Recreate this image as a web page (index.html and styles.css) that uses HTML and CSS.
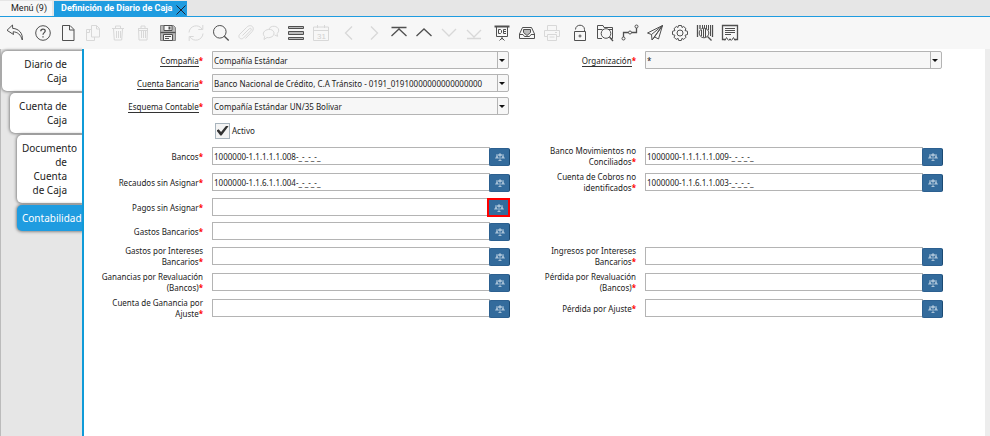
FILE: index.html
```html
<!DOCTYPE html>
<html lang="es">
<head>
<meta charset="utf-8">
<title>Definición de Diario de Caja</title>
<link rel="stylesheet" href="styles.css">
</head>
<body>
<svg class="defs" aria-hidden="true">
  <symbol id="scale" viewBox="0 0 10 8">
    <path d="M5 0v8M1 2h8M3.500 7.500h3" fill="none" stroke="currentColor"/>
    <path d="M2 2L0 5.500h4zM8 2L6 5.500h4zM3.500 1h3v2h-3z" fill="currentColor"/>
  </symbol>
</svg>

<nav class="windows">
  <a class="window-tab" href="#">Menú (9)</a>
  <a class="window-tab active" href="#">Definición de Diario de Caja
    <svg class="close" width="10" height="10" viewBox="0 0 10 10"><path d="M.5.5l9 9M9.500.5l-9 9"/></svg></a>
</nav>

<div class="toolbar">
  <div class="group">
    <button aria-label="Deshacer"><svg viewBox="0 0 18 18"><path d="M6.500 1L1 6.300l6.500 4.200-.4-2.700c4.400.2 7.500 2.600 9.200 8.200.8-6.500-3.300-11.300-9.600-11.600z"/></svg></button>
  </div>
  <div class="group">
    <button aria-label="Ayuda"><svg viewBox="0 0 18 18"><circle cx="9" cy="9" r="7.300"/><path d="M6.800 7.200C6.800 4.400 11.200 4.400 11.200 7c0 1.600-2.200 1.700-2.200 3.800M9 12.200v1.400" class="mid"/></svg></button>
    <button aria-label="Nuevo"><svg viewBox="0 0 18 18"><path d="M3.500 1.500h7.500l4 4v11H3.500zM10.500 1.500v4.500h4.500"/></svg></button>
    <button aria-label="Copiar" disabled><svg viewBox="0 0 18 18"><path d="M7.500 1.500h5l3 3v8.500h-8zM12.500 1.500v3.500h3M7.500 5.500h-5v11h8v-3.500M5.500 5.500v3h-3"/></svg></button>
    <button aria-label="Eliminar" disabled><svg viewBox="0 0 18 18"><path d="M3 4.500h12M6.500 4.500v-2.500h5v2.500M4.500 5l.8 11h7.400l.8-11M7.500 7v7M9.500 7v7M11.500 7v7"/></svg></button>
    <button aria-label="Eliminar selección" disabled><svg viewBox="0 0 18 18"><path d="M4 4.500h10M7 4.500v-2.500h4v2.500M4.500 5l.5 11h8l.5-11M7.500 7v7M9.500 7v7M11.500 7v7M4.500 6.500h9"/></svg></button>
    <button aria-label="Guardar"><svg viewBox="0 0 18 18"><path d="M1.500 1.500h13l2 2v13h-15z" fill="#b8b8b8" class="soft"/><path d="M5 1.500h8v5H5z" fill="#f7f7f7"/><path d="M10.500 2.500v3" class="bold"/><path d="M1.500 8.500h15" class="mid"/><path d="M4.500 10.500h9v6h-9z" fill="#f7f7f7"/><path d="M6 12.500h6M6 14.500h4"/></svg></button>
  </div>
  <div class="group">
    <button aria-label="Refrescar" disabled><svg viewBox="0 0 18 18"><path d="M2 8.500C2.500 1.500 11.500-.5 15 5M15.800 1v4.500h-4.500M16 9.500c-.5 7-9.500 9-13 3.500M2.200 17v-4.500h4.500"/></svg></button>
    <button aria-label="Buscar"><svg viewBox="0 0 18 18"><circle cx="7.800" cy="7.800" r="6.300"/><path d="M12.300 12.300L16.700 16.500" class="mid"/></svg></button>
    <button aria-label="Adjunto" disabled><svg viewBox="0 0 18 18"><path d="M5.500 11.500l6.500-6.500c2-1.500 3 0 1.800 1.500L6.500 14C3.800 16.200.5 13.500 2.500 10.500l7-7c4-4.300 9-.2 5.700 4L8.500 14.500"/></svg></button>
    <button aria-label="Chat" disabled><svg viewBox="0 0 18 18"><path d="M6.500 5.500c6-1 8 6.500 1.500 8-1.200.3-2 .2-3 0L2 15.500l.6-3C-.5 9.500 2.500 5.800 6.500 5.500zM7 5c1.500-4 9.300-3.500 9.700 1 .1 1.600-.6 2.700-1.700 3.600l.6 2.700-3-1.300"/></svg></button>
    <button aria-label="Cuadrícula"><svg viewBox="0 0 18 18"><path d="M1.500 2.500h15v2h-15zM1.500 7.500h15v3h-15zM1.500 13.500h15v2h-15z" fill="#bbb"/></svg></button>
    <button aria-label="Calendario" disabled><svg viewBox="0 0 18 18"><path d="M1.500 3h15v13.500h-15zM1.500 6.500h15M5.500 1v3M12.500 1v3"/><text x="5" y="14.500">31</text></svg></button>
  </div>
  <div class="group">
    <button aria-label="Anterior" disabled><svg viewBox="0 0 18 18"><path d="M12 2.500L5.500 9l6.500 6.500" class="mid"/></svg></button>
    <button aria-label="Siguiente" disabled><svg viewBox="0 0 18 18"><path d="M6 2.500L12.500 9 6 15.500" class="mid"/></svg></button>
    <button aria-label="Primer registro"><svg viewBox="0 0 18 18"><path d="M1.500 3.500h15M1.500 12L9 5l7.500 7" class="mid"/></svg></button>
    <button aria-label="Registro anterior"><svg viewBox="0 0 18 18"><path d="M1.500 12L9 5l7.500 7" class="mid"/></svg></button>
    <button aria-label="Registro siguiente" disabled><svg viewBox="0 0 18 18"><path d="M2 5l7 7 7-7" class="mid"/></svg></button>
    <button aria-label="Último registro" disabled><svg viewBox="0 0 18 18"><path d="M2 6l7 7 7-7M2 14.500h14" class="mid"/></svg></button>
  </div>
  <div class="group">
    <button aria-label="Informe"><svg viewBox="0 0 18 18"><path d="M1.500 2.500h15" class="bold"/><path d="M3.500 3v9.500h11V3M9 12.500v3M6.500 16.500L9 14l2.500 2.500M5.500 5.500h2l1 1v2l-1 1h-2zM13 5.500h-2.500v4H13M10.500 7.500H13"/></svg></button>
    <button aria-label="Archivo"><svg viewBox="0 0 18 18"><path d="M1.500 10L4.500 3.500h9l3 6.500v4.500h-15z"/><path d="M1.500 10.500h3.500l1.500 2h5l1.500-2h3.500"/><path d="M5.500 5.500h7v3L9 11.500 5.500 8.500z" fill="#bbb"/></svg></button>
    <button aria-label="Imprimir" disabled><svg viewBox="0 0 18 18"><path d="M4.500 6.500v-5h9v5M4.500 12.500h-3v-6h15v6h-3M4.500 10.500h9v6h-9zM6.500 13h5M12 8.500h2"/></svg></button>
  </div>
  <div class="group">
    <button aria-label="Bloqueo"><svg viewBox="0 0 18 18"><path d="M3.500 7.500h11v9h-11z"/><path d="M4.500 5.500C4.500-.2 13.500-.2 13.500 5.500v2"/><circle cx="9" cy="12" r="1"/></svg></button>
    <button aria-label="Zoom"><svg viewBox="0 0 18 18"><path d="M15 14.500h1.500v-11H8l-1-2H1.500v13H6M1.500 5.500h5M12.500 5.500h4"/><circle cx="10" cy="9.500" r="4.800"/><path d="M13.500 13l3.500 4" class="mid"/></svg></button>
    <button aria-label="Flujo de trabajo"><svg viewBox="0 0 18 18"><circle cx="2.500" cy="14.500" r="1.500"/><circle cx="9" cy="8.500" r="1.500"/><circle cx="15.500" cy="2.500" r="1.500"/><path d="M2.500 13V8.500h5M10.500 8.500h5V4" class="mid"/></svg></button>
    <button aria-label="Enviar"><svg viewBox="0 0 18 18"><path d="M16.500 1.500L1.500 9l4 1.500L6 16l2.800-3 3.700 2zM16.500 1.500L5.500 10.500M16.500 1.500L8.500 13M16.500 1.500L6 16"/></svg></button>
    <button aria-label="Proceso"><svg viewBox="0 0 18 18"><path d="M7.500 1.500h3l.5 2 1.700-1 2.300 2.200-1 1.800 2.500.8v3.200l-2.500.8 1 1.900-2.200 2.200-1.900-1-.6 2.100H7.700l-.6-2.100-1.900 1L3 13.200l1-1.900-2.500-.8V7.300L4 6.500l-1-1.800 2.300-2.200 1.700 1z"/><circle cx="9" cy="9" r="3"/></svg></button>
    <button aria-label="Información del producto"><svg viewBox="0 0 18 18"><path d="M1.500 1v12M4 1v4M16.500 1v12" class="mid"/><path d="M6.500 1v3M8.500 1v3M10.500 1v4M12.500 1v5M14.500 1v11"/><circle cx="8" cy="9" r="4.800"/><path d="M5.500 6v6M7.500 5v8M9.500 5v8"/><path d="M11.500 12.500l4 4" class="mid"/></svg></button>
    <button aria-label="Personalizar"><svg viewBox="0 0 18 18"><path d="M4 15.500H1.500v-14h15v14H14M8 15.500h2" class="mid"/><path d="M4 4.500h10M4 6.500h10M4 8.500h10M4 10.500h6"/><path d="M4 16.500l1.500-3 2 3M10.500 16.500l2-3 1.500 3"/></svg></button>
  </div>
</div>

<div class="workspace">
  <nav class="levels">
    <a href="#" class="level first"><span>Diario de Caja</span></a>
    <a href="#" class="level second"><span>Cuenta de Caja</span></a>
    <a href="#" class="level third"><span>Documento de Cuenta de Caja</span></a>
    <a href="#" class="level third current"><span>Contabilidad</span></a>
  </nav>

  <form class="panel">
    <div class="row compact">
      <label for="company"><u>Compañía</u><b>*</b></label>
      <span class="combo"><select id="company"><option>Compañía Estándar</option></select></span>
      <label for="org"><u>Organización</u><b>*</b></label>
      <span class="combo"><select id="org"><option>*</option></select></span>
    </div>
    <div class="row compact">
      <label for="account"><u>Cuenta Bancaria</u><b>*</b></label>
      <span class="combo"><select id="account"><option>Banco Nacional de Crédito, C.A Tránsito - 0191_01910000000000000000</option></select></span>
    </div>
    <div class="row compact">
      <label for="schema"><u>Esquema Contable</u><b>*</b></label>
      <span class="combo"><select id="schema"><option>Compañía Estándar UN/35 Bolivar</option></select></span>
    </div>
    <div class="row">
      <div class="check"><input type="checkbox" id="active" checked><label for="active">Activo</label></div>
    </div>
    <div class="row tall">
      <label for="f1"><span>Bancos<b>*</b></span></label>
      <span class="account"><input type="text" id="f1" value="1000000-1.1.1.1.1.008-_-_-_-_"><button type="button" aria-label="Combinación"><svg><use href="#scale"/></svg></button></span>
      <label for="f2"><span>Banco Movimientos no Conciliados<b>*</b></span></label>
      <span class="account"><input type="text" id="f2" value="1000000-1.1.1.1.1.009-_-_-_-_"><button type="button" aria-label="Combinación"><svg><use href="#scale"/></svg></button></span>
    </div>
    <div class="row tall">
      <label for="f3"><span>Recaudos sin Asignar<b>*</b></span></label>
      <span class="account"><input type="text" id="f3" value="1000000-1.1.6.1.1.004-_-_-_-_"><button type="button" aria-label="Combinación"><svg><use href="#scale"/></svg></button></span>
      <label for="f4"><span>Cuenta de Cobros no identificados<b>*</b></span></label>
      <span class="account"><input type="text" id="f4" value="1000000-1.1.6.1.1.003-_-_-_-_"><button type="button" aria-label="Combinación"><svg><use href="#scale"/></svg></button></span>
    </div>
    <div class="row">
      <label for="f5"><span>Pagos sin Asignar<b>*</b></span></label>
      <span class="account marked"><input type="text" id="f5"><button type="button" aria-label="Combinación"><svg><use href="#scale"/></svg></button></span>
    </div>
    <div class="row">
      <label for="f6"><span>Gastos Bancarios<b>*</b></span></label>
      <span class="account"><input type="text" id="f6"><button type="button" aria-label="Combinación"><svg><use href="#scale"/></svg></button></span>
    </div>
    <div class="row tall">
      <label for="f7"><span>Gastos por Intereses Bancarios<b>*</b></span></label>
      <span class="account"><input type="text" id="f7"><button type="button" aria-label="Combinación"><svg><use href="#scale"/></svg></button></span>
      <label for="f8"><span>Ingresos por Intereses Bancarios<b>*</b></span></label>
      <span class="account"><input type="text" id="f8"><button type="button" aria-label="Combinación"><svg><use href="#scale"/></svg></button></span>
    </div>
    <div class="row tall">
      <label for="f9"><span>Ganancias por Revaluación (Bancos)<b>*</b></span></label>
      <span class="account"><input type="text" id="f9"><button type="button" aria-label="Combinación"><svg><use href="#scale"/></svg></button></span>
      <label for="f10"><span>Pérdida por Revaluación (Bancos)<b>*</b></span></label>
      <span class="account"><input type="text" id="f10"><button type="button" aria-label="Combinación"><svg><use href="#scale"/></svg></button></span>
    </div>
    <div class="row tall">
      <label for="f11"><span>Cuenta de Ganancia por Ajuste<b>*</b></span></label>
      <span class="account"><input type="text" id="f11"><button type="button" aria-label="Combinación"><svg><use href="#scale"/></svg></button></span>
      <label for="f12"><span>Pérdida por Ajuste<b>*</b></span></label>
      <span class="account"><input type="text" id="f12"><button type="button" aria-label="Combinación"><svg><use href="#scale"/></svg></button></span>
    </div>
  </form>
</div>
</body>
</html>
```
FILE: styles.css
```css
* { box-sizing: border-box; }
body {
  margin: 0;
  min-height: 100vh;
  display: flex;
  flex-direction: column;
  background: #e6e6e6;
  color: #222;
  font: 8px/11px "Noto Sans", sans-serif;
}
input, select, button { font: inherit; color: inherit; margin: 0; }
a { color: inherit; text-decoration: none; }
.defs { display: none; }

/* open windows */
.windows {
  display: flex;
  gap: 2px;
  padding-top: 1px;
  border-bottom: 1px solid #1f9ce0;
}
.window-tab {
  height: 15px;
  padding: 0 5px 0 11px;
  background: #f7f7f7;
  font: 9px/14px Roboto, sans-serif;
  white-space: nowrap;
}
.window-tab.active {
  display: flex;
  gap: 4px;
  padding: 0 1px 0 7px;
  background: #1f9ce0;
  color: #fff;
  font-weight: bold;
}
.close { align-self: flex-end; fill: none; stroke: #223; margin-bottom: 1px; }

/* toolbar */
.toolbar {
  display: flex;
  gap: 3px;
  height: 32px;
  padding-left: 2px;
  background: #f7f7f7;
}
.group { display: flex; }
.toolbar button {
  display: flex;
  align-items: center;
  justify-content: center;
  width: 25px;
  padding: 0;
  border: 0;
  background: none;
}
.toolbar svg { width: 18px; height: 18px; fill: none; stroke: #505050; stroke-width: 1; }
.toolbar button:disabled svg { stroke: #d8d8d8; }
.toolbar .mid { stroke-width: 1.300; }
.toolbar .bold { stroke-width: 2; }
.toolbar .soft { stroke: #888; }
.toolbar text { fill: #d0d0d0; stroke: none; font: 8px "Liberation Sans", sans-serif; }

/* tab levels and form */
.workspace { flex: 1; display: flex; }
.levels {
  flex: none;
  display: flex;
  flex-direction: column;
  gap: 2px;
  width: 84px;
  padding: 2px 0 0 2px;
  border-right: 2px solid #0f9bd8;
  box-shadow: inset 1px 0 #bbb;
}
.level {
  padding: 6px 15px 6px 5px;
  border-radius: 5px 0 0 5px;
  background: #fff;
  box-shadow: 0 0 3px 1px #888;
  color: #222;
  font-size: 10px;
  line-height: 14px;
  text-align: right;
  clip-path: inset(-4px 0 -4px -4px);
}
.level span { display: block; }
.second { margin-left: 8px; }
.third { margin-left: 15px; }
.current { background: #1f9ce0; color: #fff; }
.panel {
  flex: 1;
  padding-right: 35px;
  border-right: 5px solid #ededed;
  background: #fff;
}
.row {
  display: grid;
  grid-template-columns: 128px 1fr 128px 1fr;
  align-items: center;
  min-height: 24px;
}
.compact { min-height: 23px; padding-bottom: 1px; }
.compact + .row:not(.compact) { min-height: 25px; }
.tall { min-height: 26px; }
.row > label { padding: 0 9px 0 12px; text-align: right; }
.row b { color: #f00; }
.row u { text-decoration: none; border-bottom: 1px solid #333; }

.combo { position: relative; margin-right: 8px; }
.combo select {
  display: block;
  appearance: none;
  width: 100%;
  height: 18px;
  padding: 0 14px 0 1px;
  border: 1px solid #b4b4b4;
  border-radius: 0 2px 2px 0;
  background: #f7f7f7;
}
.combo::after {
  content: "";
  position: absolute;
  top: 8px;
  right: 4px;
  border: 3px solid transparent;
  border-top-color: #111;
  border-bottom: 0;
}
.combo::before {
  content: "";
  position: absolute;
  top: 1px;
  bottom: 1px;
  right: 11px;
  border-left: 1px solid #b4b4b4;
}
.check { grid-column: 2; display: flex; align-items: center; gap: 2px; padding-left: 3px; }
.check input {
  appearance: none;
  width: 15px;
  height: 16px;
  border: 1px solid #a8b4bd;
  background: #f4f4f4;
  display: grid;
  place-items: center;
}
.check input:checked::before {
  content: "";
  width: 12px;
  height: 10px;
  background: #333;
  clip-path: polygon(0 50%, 18% 38%, 38% 65%, 82% 0, 100% 8%, 42% 100%, 32% 100%);
}

.account { display: flex; margin-right: 7px; }
.account input {
  flex: 1;
  min-width: 0;
  height: 18px;
  padding: 0 1px;
  border: 1px solid #b4b4b4;
  background: #fff;
}
.account button {
  display: flex;
  align-items: center;
  justify-content: center;
  width: 21px;
  height: 18px;
  margin: 1px 0 -1px -1px;
  padding: 0;
  border: 1px solid #2c6090;
  border-right-color: #1b4a73;
  border-radius: 2px;
  background: #336b9c;
  color: #a9c2d7;
}
.account svg { width: 10px; height: 8px; }
.account.marked button {
  width: 23px;
  height: 19px;
  margin: 0 0 -1px -3px;
  border: 2px solid #f00;
  border-radius: 0;
}
```
